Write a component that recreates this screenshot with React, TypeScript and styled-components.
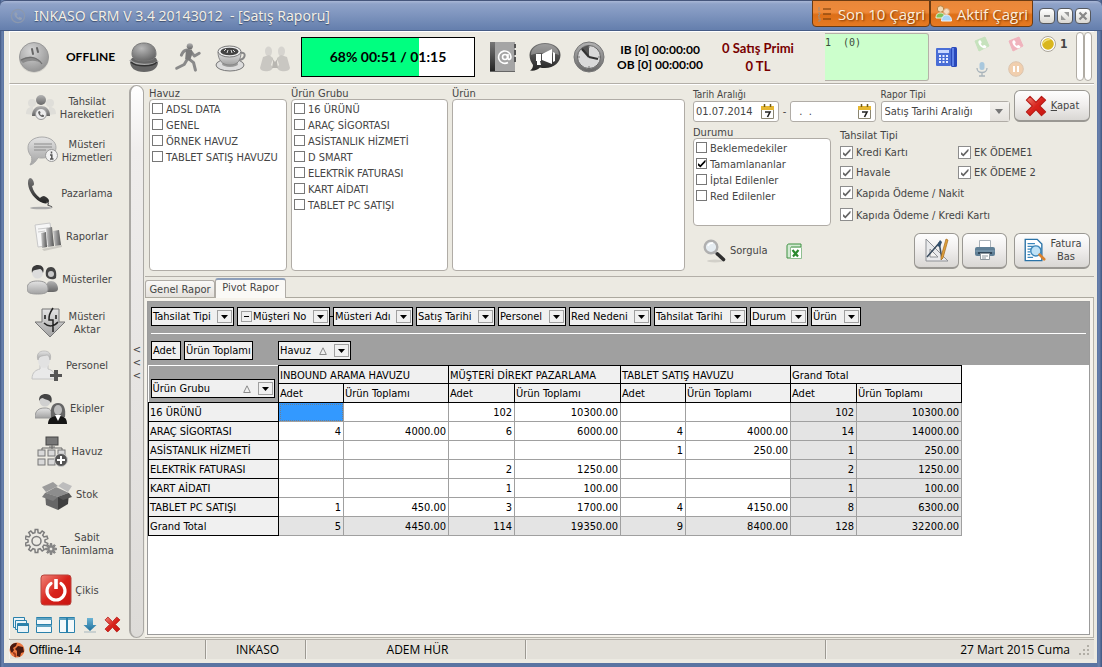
import React from "react";
import styled, { createGlobalStyle, css } from "styled-components";

const UI = '"DejaVu Sans Condensed", "Noto Sans", sans-serif';
const SEGOE = '"Open Sans", "Noto Sans", sans-serif';
const HEAVY = 'Lato, "Open Sans", sans-serif';

const GlobalStyle = createGlobalStyle`
  *, *::before, *::after { box-sizing: border-box; }
  body { margin: 0; font: 11px/14px ${UI}; color: #454545; background: #4b648f; }
  button, input, select { font: inherit; color: inherit; margin: 0; }
  button { cursor: pointer; }
  svg { display: block; flex: none; }
`;

/* ---------- window frame ---------- */

const Window = styled.div`
  min-height: 100vh;
  display: flex;
  flex-direction: column;
  padding: 0 5px 4px 4px;
  background: linear-gradient(90deg, #3f5580 0, #6b83ae 2px, #5a74a2 4px, #5a74a2 calc(100% - 5px), #6b83ae calc(100% - 3px), #3f5580 100%);
`;

const TitleBar = styled.header`
  height: 31px;
  margin: 0 -5px 0 -4px;
  padding: 0 11px 0 10px;
  display: flex;
  align-items: center;
  border-top: 1px solid #46567c;
  border-bottom: 1px solid #465c86;
  border-radius: 6px 6px 0 0;
  background: linear-gradient(#a9b7d6 0, #8fa2c8 3px, #8197c0 12px, #6680ae 28px);
`;

const Title = styled.h1`
  flex: 1;
  margin: 0 0 0 8px;
  font: 400 14px/20px "Noto Sans", "Open Sans", sans-serif;
  white-space: pre;
  color: #f3efe6;
  text-shadow: 0 1px 1px #3e4f70;
`;

const CallButton = styled.button`
  align-self: flex-start;
  height: 27px;
  width: ${(p: { $w: number }) => p.$w}px;
  margin-top: -1px;
  padding: 0;
  display: flex;
  align-items: center;
  justify-content: center;
  gap: 5px;
  border: 1px solid #6b3b12;
  border-radius: 0 0 4px 4px;
  background: linear-gradient(#e8873a, #ef8a3a 45%, #dd6f18 55%, #e67a22);
  font: 400 15px/20px ${SEGOE};
  white-space: nowrap;
  color: #fbeedd;
  text-shadow: 1px 1px 2px #7a3603;
`;

const WindowButtons = styled.div`
  display: flex;
  gap: 2px;
  margin-left: 6px;
`;

const WindowButton = styled.button`
  width: 16px;
  height: 16px;
  padding: 0;
  display: grid;
  place-items: center;
  border: 1px solid #55585e;
  border-radius: 4px;
  background: linear-gradient(#fff, #d9d7d2);
`;

const Client = styled.div`
  flex: 1;
  display: flex;
  flex-direction: column;
  padding: 0 3px 4px 5px;
  background: #eceae2;
`;

/* ---------- top toolbar ---------- */

const Toolbar = styled.div`
  height: 53px;
  display: flex;
  align-items: center;
  padding: 0 0 2px 8px;
  border-left: 1px solid #fff;
  border-top: 1px solid #fff;
  border-bottom: 1px solid #b3afa8;
  background: #eceae2;
`;

const ToolButton = styled.button`
  width: ${(p: { $w?: number }) => p.$w ?? 44}px;
  padding: 0;
  display: grid;
  place-items: center;
  border: 0;
  background: none;
`;

const Presence = styled.strong`
  width: 63px;
  margin-left: 9px;
  font: 700 12px/16px ${HEAVY};
  color: #000;
  text-align: center;
`;

const Progress = styled.div`
  width: 174px;
  height: 40px;
  margin: 0 8px 0 4px;
  display: grid;
  place-items: center;
  border: 1px solid #000;
  background: linear-gradient(90deg, #00ff80 68%, #fff 68%);
  font: 700 14px/20px ${HEAVY};
  color: #000;
`;

const Counter = styled.div`
  width: ${(p: { $w: number; $red?: boolean }) => p.$w}px;
  text-align: center;
  white-space: nowrap;
  font: 700 ${(p) => (p.$red ? "13px/18px" : "12px/15px")} ${HEAVY};
  color: ${(p) => (p.$red ? "#780000" : "#000")};
`;

const LineMonitor = styled.div`
  flex: 1;
  max-width: 104px;
  height: 48px;
  margin-left: 18px;
  border: 1px solid #b5b1a9;
  border-left: 0;
  border-radius: 0 3px 3px 0;
  background: #ccffcc;
  font: 10px/18px "DejaVu Sans Mono", monospace;
  color: #3b4b3b;
  white-space: pre;
`;

const CallGrid = styled.div`
  display: grid;
  grid-template-columns: 34px 34px;
  grid-auto-rows: 25px;
  margin-right: 7px;
`;

const Score = styled.div`
  align-self: flex-start;
  display: flex;
  align-items: center;
  gap: 4px;
  margin-top: 4px;
  font: 700 12px/16px ${UI};
`;

const Meters = styled.div`
  display: flex;
  margin: 0 2px 0 auto;
`;

const Meter = styled.div`
  width: 8px;
  height: 49px;
  border: 1px solid #b0aca4;
  border-radius: 4px;
  background: #fff;
`;

/* ---------- body ---------- */

const Body = styled.div`
  flex: 1;
  display: flex;
  border-top: 1px solid #fff;
  border-left: 1px solid #fff;
`;

const Sidebar = styled.nav`
  width: 119px;
  padding-top: 1px;
  display: flex;
  flex-direction: column;
`;

const NavItem = styled.button`
  height: ${(p: { $h?: number }) => p.$h ?? 43}px;
  padding: 0;
  display: flex;
  align-items: center;
  justify-content: center;
  gap: 3px;
  border: 0;
  background: none;
  line-height: 13px;
`;

const WindowTools = styled.div`
  display: flex;
  justify-content: space-around;
  padding: 7px 5px 0 0;
`;

const Splitter = styled.button`
  width: 15px;
  padding: 1px 0 0;
  border: 2px solid #aaa8a4;
  border-width: 1px 1px 1px 2px;
  border-radius: 8px;
  background: linear-gradient(#fff, #efedec 12%, #dddbd8);
  line-height: 13px;
`;

const Main = styled.main`
  flex: 1;
  min-width: 0;
  margin-left: 1px;
  display: flex;
  flex-direction: column;
`;

const Filters = styled.section`
  display: flex;
  gap: 4px;
  height: 192px;
  padding: 2px 4px 5px 4px;
  border-bottom: 1px solid #b3afa8;
`;

const ListGroup = styled.fieldset`
  width: ${(p: { $w?: number; $top?: number }) => (p.$w ? `${p.$w}px` : "auto")};
  flex: ${(p) => (p.$w ? "none" : "1")};
  min-width: 0;
  margin: 0;
  padding: ${(p) => p.$top ?? 0}px 0 0;
  border: 0;
  display: flex;
  flex-direction: column;
`;

const GroupLabel = styled.div`
  height: 12px;
  line-height: 13px;
`;

const ListBox = styled.div`
  flex: 1;
  padding: 1px 2px;
  border: 1px solid #b0aca6;
  border-radius: 4px;
  background: #fff;
`;

const CheckLabel = styled.label`
  height: ${(p: { $h: number }) => p.$h}px;
  line-height: ${(p) => p.$h + 2}px;
  display: flex;
  align-items: flex-start;
  gap: 3px;
  white-space: nowrap;
`;

const CheckBox = styled.input.attrs({ type: "checkbox" })`
  appearance: none;
  flex: none;
  width: ${(p: { $big?: boolean }) => (p.$big ? 13 : 11)}px;
  height: ${(p) => (p.$big ? 13 : 11)}px;
  margin-top: ${(p) => (p.$big ? 4 : 2)}px;
  border: 1px solid ${(p) => (p.$big ? "#8d8d8d" : "#777")};
  background: #fff;
  display: grid;
  place-items: center;
  &:checked::before {
    content: "";
    width: 8px;
    height: 8px;
    background: ${(p) => (p.$big ? "#666" : "#000")};
    clip-path: polygon(0 40%, 36% 70%, 100% 0, 100% 32%, 36% 100%, 0 70%);
  }
`;

const Query = styled.div`
  width: 397px;
  margin-left: 4px;
  padding-top: 2px;
  display: flex;
  flex-direction: column;
`;

const QueryRow = styled.div`
  display: flex;
  align-items: flex-end;
  justify-content: space-between;
`;

const DateRange = styled.div`
  display: flex;
  align-items: flex-end;
`;

const Field = styled.label`
  display: flex;
  flex-direction: column;
  font-size: 10px;
  line-height: 12px;
`;

const DateBox = styled.span`
  width: 86px;
  height: 21px;
  display: flex;
  align-items: center;
  padding-right: 3px;
  border: 1px solid #b0aca6;
  border-radius: 3px;
  background: #fff;
`;

const DateInput = styled.input`
  flex: 1;
  width: 0;
  padding: 0 0 0 2px;
  border: 0;
  outline: 0;
  background: none;
  font-size: 11px;
  white-space: pre;
`;

const Dash = styled.span`
  width: 11px;
  line-height: 20px;
  text-align: center;
`;

const SelectBox = styled.span`
  width: 129px;
  height: 21px;
  display: grid;
  align-items: center;
  border: 1px solid #b0aca6;
  border-radius: 3px;
  background: #fff;
  > * { grid-area: 1 / 1; }
`;

const Select = styled.select`
  appearance: none;
  width: 100%;
  padding: 0 20px 0 3px;
  border: 0;
  background: none;
  font-size: 11px;
`;

const SelectArrow = styled.span`
  justify-self: end;
  width: 19px;
  height: 19px;
  display: grid;
  place-items: center;
  background: linear-gradient(#f4f2ef, #e4e1dc);
  pointer-events: none;
`;

const PushButton = styled.button`
  width: ${(p: { $w: number; $h: number }) => p.$w}px;
  height: ${(p) => p.$h}px;
  padding: 0;
  display: flex;
  align-items: center;
  justify-content: center;
  gap: 4px;
  border: 1px solid #9a9893;
  border-bottom-width: 2px;
  border-radius: 6px;
  background: linear-gradient(#fefefe, #f1efee 45%, #d9d7d4);
  line-height: 13px;
`;

const Criteria = styled.div`
  display: flex;
  gap: 9px;
  margin-top: 4px;
`;

const PayGrid = styled.div`
  display: grid;
  grid-template-columns: 118px auto;
  margin-top: 1px;
`;

const PayFull = styled.div`
  grid-column: 1 / -1;
`;

const Actions = styled.div`
  flex: 1;
  display: flex;
  align-items: center;
  gap: 7px;
  padding: 4px 0 0 10px;
`;

const ReportTools = styled.div`
  display: flex;
  gap: 3px;
  margin-left: auto;
`;

const LinkButton = styled.button`
  display: flex;
  align-items: center;
  gap: 3px;
  padding: 0;
  border: 0;
  background: none;
`;

/* ---------- report tabs ---------- */

const Tabs = styled.div`
  height: 21px;
  display: flex;
  align-items: flex-end;
  border-bottom: 1px solid #aca99f;
`;

const Tab = styled.button<{ $active?: boolean }>`
  width: ${(p) => (p.$active ? 71 : 70)}px;
  padding: 0;
  white-space: nowrap;
  border: 1px solid #b0aca6;
  border-bottom: 0;
  border-radius: 3px 3px 0 0;
  ${(p) =>
    p.$active
      ? css`
          height: 20px;
          margin-bottom: -1px;
          padding-bottom: 2px;
          border-top: 2px solid #8d9fba;
          background: #faf9f6;
        `
      : css`
          height: 17px;
          padding-top: 2px;
          background: linear-gradient(#faf9f7, #e4e1dc);
        `}
`;

const Page = styled.div`
  flex: 1;
  padding: 3px 3px 2px 2px;
  border-right: 1px solid #b7b4ab;
  border-bottom: 1px solid #b7b4ab;
  background: #f6f3ec;
  display: flex;
`;

const Pivot = styled.div`
  flex: 1;
  border: 1px solid #9b9b9b;
  background: #fff;
  color: #000;
`;

const PivotZone = styled.div`
  padding: 5px 3px 0;
  background: #a0a0a0;
`;

const ChipRow = styled.div`
  display: flex;
  gap: 3px;
`;

const FilterRow = styled(ChipRow)`
  padding-bottom: 7px;
  border-bottom: 1px solid #fff;
`;

const DataRow = styled(ChipRow)`
  padding: 7px 0 5px;
`;

const ColumnField = styled.div`
  margin-left: 22px;
`;

const Chip = styled.div<{ $w: number; $linked?: boolean }>`
  width: ${(p) => p.$w}px;
  height: 19px;
  display: flex;
  align-items: center;
  padding: 0 1px 0 1px;
  border: 1px solid #000;
  background: #f0f0f0;
  white-space: nowrap;
  ${(p) =>
    p.$linked &&
    css`
      position: relative;
      &::after {
        content: "";
        position: absolute;
        left: 100%;
        width: 5px;
        height: 1px;
        background: #000;
      }
    `}
`;

const ChipText = styled.span`
  flex: 1;
`;

const ChipDrop = styled.button`
  width: 15px;
  height: 13px;
  flex: none;
  padding: 0;
  display: grid;
  place-items: center;
  border: 1px solid #a0a0a0;
  background: #f0f0f0;
`;

const Collapse = styled(ChipDrop)`
  width: 11px;
  height: 11px;
  margin: 0 1px 0 2px;
`;

const SortMark = styled.span`
  margin-right: 7px;
`;

const Grid = styled.table`
  width: 814px;
  table-layout: fixed;
  border-collapse: collapse;
  line-height: 14px;
`;

const HeadCell = styled.th`
  height: ${(p: { $tall?: boolean }) => (p.$tall ? 19 : 18)}px;
  padding: 2px 1px 0;
  border: 1px solid #000;
  background: #f0f0f0;
  font-weight: 400;
  text-align: left;
  white-space: nowrap;
`;

const Corner = styled.td`
  padding: 10px 0 0 2px;
  background: #a0a0a0;
`;

const Value = styled.td<{ $total?: boolean; $selected?: boolean }>`
  height: 19px;
  padding: 2px 2px 0;
  border: 1px solid #a0a0a0;
  text-align: right;
  background: ${(p) => (p.$selected ? "#3399ff" : p.$total ? "#e4e4e4" : "#fff")};
  ${(p) => p.$selected && "outline: 1px dotted #6f7f8f; outline-offset: -2px;"}
`;

/* ---------- status bar ---------- */

const StatusBar = styled.footer`
  height: 20px;
  display: flex;
  margin-top: 1px;
  border-top: 1px solid #b3afa8;
  background: #e3e0d9;
  font: 12px/18px ${SEGOE};
  color: #000;
`;

const StatusCell = styled.div`
  width: ${(p: { $w?: number; $align?: string }) => (p.$w ? `${p.$w}px` : "auto")};
  flex: ${(p) => (p.$w ? "none" : "1")};
  display: flex;
  align-items: center;
  justify-content: ${(p) => p.$align ?? "center"};
  gap: 4px;
  padding-left: ${(p) => (p.$align ? 0 : 4)}px;
  border-right: 1px solid #9c9992;
  box-shadow: inset 1px 0 #f4f2ee;
  &:last-child { border-right: 0; }
`;

const Connection = styled.span`
  font: 12px/18px "Liberation Sans", sans-serif;
`;

/* ---------- drawings ---------- */

const Defs = styled.svg`
  position: absolute;
`;

const GradientDefs = () => (
  <Defs width="0" height="0" aria-hidden>
    <defs>
      <linearGradient id="g-light" x1="0" y1="0" x2="0" y2="1"><stop offset="0" stopColor="#e4e4e4" /><stop offset="1" stopColor="#a2a2a2" /></linearGradient>
      <linearGradient id="g-mid" x1="0" y1="0" x2="0" y2="1"><stop offset="0" stopColor="#b4b4b4" /><stop offset="1" stopColor="#666" /></linearGradient>
      <linearGradient id="g-dark" x1="0" y1="0" x2="0" y2="1"><stop offset="0" stopColor="#777" /><stop offset="1" stopColor="#222" /></linearGradient>
      <linearGradient id="g-side" x1="0" y1="0" x2="1" y2="0"><stop offset="0" stopColor="#ccc" /><stop offset="1" stopColor="#555" /></linearGradient>
      <linearGradient id="g-red" x1="0" y1="0" x2="1" y2="1"><stop offset="0" stopColor="#f08478" /><stop offset=".5" stopColor="#d8231c" /><stop offset="1" stopColor="#c81410" /></linearGradient>
      <linearGradient id="g-blue" x1="0" y1="0" x2="0" y2="1"><stop offset="0" stopColor="#6db4d4" /><stop offset="1" stopColor="#1c6f9c" /></linearGradient>
      <radialGradient id="g-ball" cx=".4" cy=".3" r=".8"><stop offset="0" stopColor="#d6d6d6" /><stop offset="1" stopColor="#8d8d8d" /></radialGradient>
      <radialGradient id="g-bun" cx=".4" cy=".3" r=".8"><stop offset="0" stopColor="#b8b8b8" /><stop offset="1" stopColor="#5e5e5e" /></radialGradient>
    </defs>
  </Defs>
);

const Ico = ({ s = 32, children, v = "0 0 32 32", h }: { s?: number; h?: number; v?: string; children: React.ReactNode }) => (
  <svg width={s} height={h ?? s} viewBox={v} fill="none" aria-hidden>{children}</svg>
);

const HANDSET = "M3 2c1.500-1 3-.5 3.600.8l1 2.400c.3.900 0 1.600-.8 2.200l-.8.600c.8 1.800 2.200 3.200 4 4l.6-.8c.6-.8 1.300-1.100 2.200-.8l2.400 1c1.300.6 1.800 2.100.8 3.600-1.200 1.500-3 1.800-5 1C6.500 14.300 3.700 11.500 2 7 1.200 5 1.500 3.200 3 2z";

const AppIcon = () => (
  <Ico s={16} v="0 0 18 18"><circle cx="9" cy="9" r="7.500" stroke="#8b98ae" strokeWidth="1.500" /><g transform="translate(4 4) scale(.58)"><path d={HANDSET} fill="#93a0b6" /></g></Ico>
);
const ListIcon = () => (
  <Ico s={16} v="0 0 16 16"><path d="M6 3h8M6 8h8M6 13h8" stroke="#6a3608" strokeWidth="1" /><path d="M2 1v4M1 7h2v1l-2 2h2M1 12h2v3H1" stroke="#9b8f82" /></Ico>
);
const UsersIcon = () => (
  <Ico s={17} v="0 0 17 17"><circle cx="5.500" cy="4" r="3.200" fill="#f3d9b4" stroke="#b8803e" /><path d="M1 13c0-4 2-5 4.500-5S10 9 10 13z" fill="#7ec25a" stroke="#e8f7df" /><circle cx="11.500" cy="6.500" r="3" fill="#f5dcc0" stroke="#d8a878" /><path d="M6.500 16c0-4 2-6 5-6s5 2 5 6z" fill="#a9d4f5" stroke="#eef7ff" /></Ico>
);
const SadIcon = () => (
  <Ico><circle cx="16" cy="17" r="15" fill="#00000018" /><circle cx="16" cy="16" r="14.500" fill="url(#g-ball)" stroke="#999" /><path d="M14 8l1 5M19 7l1 4" stroke="#666" strokeWidth="2" strokeLinecap="round" /><path d="M2 19c7-5 17-5 22 4-5-4-12-4-19-1z" fill="#8a8a8a" /><path d="M3 19c7-4 16-4 21 4" stroke="#6f6f6f" strokeWidth="1.200" /></Ico>
);
const BurgerIcon = () => (
  <Ico><path d="M2 20c0 7 5 11 14 11s14-4 14-10l-2-4H4z" fill="#666" /><path d="M2 19c4 6 24 6 28 1" stroke="#aaa" strokeWidth="2" /><path d="M3 21c5 5 22 5 26 0" stroke="#333" strokeWidth="1.500" /><path d="M4 13C4 6 9 2 16 2s12 4 12 11c0 5-5 7-12 7S4 18 4 13z" fill="url(#g-bun)" stroke="#777" /></Ico>
);
const RunIcon = () => (
  <Ico s={30}><circle cx="19" cy="4.500" r="3.300" fill="url(#g-mid)" /><path d="M18 9c-3-1-6 0-8 5M20 10l4 5 5-3M16 19l-3 5-8 4M18 18l5 4 2 8" stroke="#8a8a8a" strokeWidth="3.200" strokeLinecap="round" strokeLinejoin="round" /><path d="M15 8h6l1 4-3 8-5-2z" fill="#7b7b7b" /></Ico>
);
const CupIcon = () => (
  <Ico><ellipse cx="15" cy="24" rx="14" ry="6" fill="#ddd" stroke="#777" /><ellipse cx="15" cy="23" rx="8" ry="3" fill="#999" /><path d="M25 12c7-2 6 7-2 7" stroke="#888" strokeWidth="2" /><path d="M3 11c0 8 4 13 12 13s11-5 11-13z" fill="url(#g-light)" stroke="#888" /><ellipse cx="14.500" cy="10.500" rx="11.500" ry="5.500" fill="#eee" stroke="#777" /><ellipse cx="14.500" cy="10.500" rx="9" ry="3.800" fill="#444" /><path d="M9 10l2-2m1 4l1-3m4 3l-1-3m4 2l-2-2" stroke="#ddd" /></Ico>
);
const MeetingIcon = () => (
  <Ico><g fill="#c9c7c2"><path d="M6 10c0-6 7-6 7 0 0 3-1 5-3 6-3-1-4-3-4-6zM19 10c0-6 7-6 7 0 0 3-1 5-4 6-2-1-3-3-3-6z" fill="#d6d4cf" /><path d="M4 16l6-2 4 3-2 7 2 2c0 5-12 6-13 1zM28 16l-6-2-4 3 2 7-2 2c0 5 12 6 13 1z" /></g><path d="M13 17l3 4 3-4-1 4 1 6h-6l1-6z" fill="#b8b6b1" /></Ico>
);
const BookIcon = () => (
  <Ico s={28} h={32} v="0 0 28 32"><rect x="1" y="1" width="25" height="30" fill="#a5a5a5" /><rect x="1" y="1" width="5" height="30" fill="url(#g-dark)" /><path d="M25 3h2v4h-2zM25 9h2v5h-2zM25 16h2v5h-2z" fill="#555" /><path d="M1 30h25v1H1z" fill="#666" /><circle cx="16" cy="16" r="2.500" stroke="#fff" strokeWidth="1.600" /><path d="M19 13v4c0 2.500 3 1.500 3-1a6.200 6.200 0 1 0-3 5.500" stroke="#fff" strokeWidth="1.600" /></Ico>
);
const MegaphoneIcon = () => (
  <Ico><path d="M16 2c9 0 15.500 5 15.500 12S25 27 16 27c-2 0-4 0-5-.5C9 29 5 30 1 29.500c2-1 3-3 3-5.500C2 21 .5 18 .5 14 .5 7 7 2 16 2z" fill="url(#g-dark)" /><path d="M2 14C2 7 8 3 16 3s14 4 14 11c-7-3-20-3-28 0z" fill="#ffffff4c" /><path d="M7 13h5v7H7zM13 13l10-5v15l-10-4zM8 20h3l1 4H8zM24 11l2 1v8l-2 1z" fill="#fff" /></Ico>
);
const ClockIcon = () => (
  <Ico><circle cx="16" cy="16" r="15" fill="url(#g-mid)" stroke="#777" /><circle cx="16" cy="16" r="11.500" fill="#d9d9d9" stroke="#666" /><path d="M16 16V4.500A11.500 11.500 0 0 0 8 8z" fill="#555" /><path d="M16 16L9 8M16 16l9 2" stroke="#333" strokeWidth="2.200" /><path d="M16 5v2M27 16h-2M16 27v-2M5 16h2" stroke="#777" /></Ico>
);
const PhoneDeviceIcon = () => (
  <Ico s={22} v="0 0 22 22"><rect x="0" y="2" width="15" height="18" rx="1" fill="#4a6ed6" /><rect x="15" y="1" width="6" height="20" rx="1.500" fill="#2a49bb" /><rect x="16" y="2" width="2" height="18" fill="#5f82e6" /><path d="M2 4h11v3H2z" fill="#c9d8ff" /><path d="M3 10h9M3 13h9M3 16h9" stroke="#e8eeff" strokeWidth="2" strokeDasharray="2 1.500" /></Ico>
);
const CardPhone = ({ fill }: { fill: string }) => (
  <Ico s={16} v="0 0 16 16"><path d="M1 5l10-4 4 9-10 5z" fill={fill} stroke={fill} strokeLinejoin="round" /><g transform="translate(3.500 3.500) scale(.54)"><path d={HANDSET} fill="#fff" /></g></Ico>
);
const MicIcon = () => (
  <Ico s={16} v="0 0 16 16"><rect x="5.500" y="1" width="5" height="8" rx="2.500" fill="#a9c8dd" /><path d="M3 7c0 6 10 6 10 0M8 11v4M5 15h6" stroke="#a9b4bb" strokeWidth="1.300" /></Ico>
);
const PauseIcon = () => (
  <Ico s={16} v="0 0 16 16"><circle cx="8" cy="8" r="7.300" fill="#f1cfae" stroke="#dcc5ae" /><path d="M6 5v6M10 5v6" stroke="#fff" strokeWidth="2" /></Ico>
);
const CoinIcon = () => (
  <Ico s={16} v="0 0 16 16"><circle cx="8" cy="8" r="7.500" fill="#fff" stroke="#aaa59a" /><circle cx="8" cy="8" r="5.800" fill="#d9b61e" /><path d="M2.500 9c2-4 6-5 9-5a5.800 5.800 0 0 0-9 5z" fill="#f2e27a" /></Ico>
);

const PeopleCallIcon = () => (
  <Ico><g fill="#dfded9"><circle cx="7" cy="11" r="4" /><circle cx="25" cy="11" r="4" /><path d="M1 22c0-6 3-7 7-7v8zM31 22c0-6-3-7-7-7v8z" /></g><circle cx="16" cy="8" r="5" fill="url(#g-mid)" /><path d="M7 24c0-7 4-10 9-10s9 3 9 10z" fill="url(#g-mid)" /><circle cx="16" cy="22" r="5.500" fill="#ededed" stroke="#999" /><g transform="translate(12.500 18.500) scale(.4)"><path d={HANDSET} fill="#666" /></g></Ico>
);
const ChatInfoIcon = () => (
  <Ico><path d="M15 2c8 0 14 4.500 14 10.500S23 23 15 23c-1.500 0-3 0-4-.4C9 26 7 29 3 30c2-3 2-6 1.500-8.500C2 19 1 16 1 12.500 1 6.500 7 2 15 2z" fill="url(#g-light)" stroke="#aaa" /><path d="M7 9h18M7 12h18M7 15h12" stroke="#8b8b8b" strokeWidth="1.200" /><circle cx="24.500" cy="20.500" r="6" fill="#f2f2f2" stroke="#999" /><path d="M24.500 16.500v2M23 20h1.800v4M23 24h3.500" stroke="#555" strokeWidth="1.500" /></Ico>
);
const HandsetIcon = () => (
  <Ico><ellipse cx="15" cy="30" rx="11" ry="1.300" fill="#aaa" /><path d="M4 0c2 0 4 3 4 6 0 1-1 2-2 2 1 5 4 9 8 12 1-1 2-2 4-2 3 1 5 3 5 5s-3 3-6 2C9 22 3 14 2 6c0-3 0-5 2-6z" fill="url(#g-dark)" /><path d="M20 24c2 0 3 1 2 2.500s4 1 4 3" stroke="#555" strokeWidth="1.200" /></Ico>
);
const ReportIcon = () => (
  <Ico><path d="M4 4l15-2 3 22-15 2z" fill="#f6f6f6" stroke="#c9c9c9" /><path d="M7 8l10-1M7 11l7-1" stroke="#ccc" /><path d="M10 12l5-1 1 15-5 1z" fill="url(#g-side)" /><path d="M15 7l6-1 2 19-6 1z" fill="url(#g-side)" /><path d="M22 10l6-1 2 15-6 1z" fill="url(#g-side)" /><path d="M11 28l20-4v2l-18 4z" fill="#00000022" /></Ico>
);
const CustomersIcon = () => (
  <Ico><path d="M19 12c-1-6 1-9 5-9s6 4 5 11c-2 2-8 2-10-2z" fill="#444" /><circle cx="24" cy="10" r="3" fill="#c9c9c9" /><path d="M19 28c0-8 1-11 5-11s7 3 7 8c0 2-2 3-5 3z" fill="url(#g-mid)" /><circle cx="10.500" cy="9" r="5.500" fill="#dcdcdc" /><path d="M5 9c-1-6 2-8 6-8s7 3 5 8c-1-3-2-4-3-4-3 1-7 0-8 4z" fill="#3a3a3a" /><path d="M0 25c0-6 4-8 10.500-8S21 19 21 25c0 4-4 5-10.500 5S0 29 0 25z" fill="url(#g-light)" stroke="#999" /></Ico>
);
const TransferIcon = () => (
  <Ico><path d="M8 2h17v13h6L16 30 1 15h7z" fill="url(#g-light)" stroke="#777" /><path d="M11 8v4M22 8v4" stroke="#222" strokeWidth="1.600" /><path d="M19 1c-4 6-4 8-4 12h4v12M10 16c4 4 10 4 14-1" stroke="#222" strokeWidth="1.500" /></Ico>
);
const AddPersonIcon = () => (
  <Ico><path d="M1 29c0-7 4-9 8-10v-4h8v4c4 1 7 3 7 10z" fill="#e9e9e9" stroke="#c4c4c4" /><ellipse cx="13" cy="10" rx="6" ry="8" fill="#e2e2e2" /><path d="M7 10C5 4 8 1 13 1s8 3 6 9c-1-4-1-4-3-5-3 1-8 0-9 5z" fill="url(#g-light)" stroke="#aaa" strokeWidth=".6" /><path d="M23 20h4v4h4v3h-4v4h-4v-4h-4v-3h4z" fill="#555" /></Ico>
);
const TeamIcon = () => (
  <Ico><circle cx="10" cy="8" r="5.500" fill="#d0d0d0" /><path d="M4 8c0-5 2-7 7-7s7 4 5 9c-2-4-6-3-8-5-2 0-3 1-4 3z" fill="#444" /><path d="M0 25c0-8 4-10 10-10 5 0 7 2 8 10z" fill="url(#g-light)" stroke="#999" /><path d="M16 24c-1-9 1-14 7-14s8 6 7 14z" fill="#666" /><ellipse cx="23" cy="17" rx="4" ry="5" fill="#bdbdbd" /><path d="M13 31c0-6 4-8 10-8s9 2 9 8z" fill="#151515" /><path d="M20 22l3 6 3-6z" fill="#fff" /></Ico>
);
const PoolIcon = () => (
  <Ico><rect x="9" y="1" width="12" height="8" fill="#777" stroke="#444" /><path d="M15 9v4M5 14v-2h20v2M12 11h6" stroke="#666" /><g fill="#d9d9d9" stroke="#777"><rect x="1" y="14" width="7" height="6" /><rect x="11" y="14" width="7" height="6" /><rect x="21" y="14" width="7" height="6" /><rect x="1" y="23" width="7" height="6" /><rect x="11" y="23" width="7" height="6" /></g><circle cx="24" cy="24" r="6.500" fill="#555" stroke="#ccc" /><path d="M24 20v8M20 24h8" stroke="#fff" strokeWidth="2" /></Ico>
);
const BoxIcon = () => (
  <Ico><path d="M4 14l13 4v13L5 26z" fill="#666" /><path d="M17 18l11-4-1 11-10 6z" fill="#3f3f3f" /><path d="M4 14l11-6 13 6-11 4z" fill="#8d8d8d" /><path d="M1 8l11-5 5 4-12 6z" fill="#9c9c9c" /><path d="M17 7l5-4 9 4-4 6z" fill="#bdbdbd" /><path d="M4 14l-3 4 11 4 5-4z" fill="#7c7c7c" /><path d="M28 14l3 4-9 3-5-3z" fill="#555" /></Ico>
);

/* Outline of a cog with n teeth between the radii r and r + t. */
const cog = (x: number, y: number, r: number, t: number, n: number) => {
  const pts: string[] = [];
  for (let i = 0; i < n; i++) {
    [[-0.3, r], [-0.18, r + t], [0.18, r + t], [0.3, r]].forEach(([o, d]) => {
      const a = ((i + o) / n) * Math.PI * 2;
      pts.push(`${(x + Math.sin(a) * d).toFixed(2)} ${(y - Math.cos(a) * d).toFixed(2)}`);
    });
  }
  return `M${pts.join("L")}Z`;
};

const GearsIcon = () => (
  <Ico><g stroke="#7d7d7d"><path d={cog(11.500, 13, 8.500, 3, 10)} fill="#eceae4" strokeWidth="1.500" /><circle cx="11.500" cy="13" r="4.500" strokeWidth="1.500" /><path d={cog(26, 21, 3.500, 2, 8)} fill="#8a8a8a" /><circle cx="26" cy="21" r="2" fill="#eceae4" /></g></Ico>
);
const PowerIcon = () => (
  <Ico><rect x="1" y="1" width="30" height="30" rx="3" fill="url(#g-red)" stroke="#b9443c" /><path d="M11 9.500a9 9 0 1 0 10 0" stroke="#fff" strokeWidth="3.200" strokeLinecap="round" /><path d="M16 5v10" stroke="#fff" strokeWidth="3.600" /></Ico>
);

const CascadeIcon = () => (
  <Ico s={16} v="0 0 16 16"><g fill="#e8f3f8" stroke="#2a81ab"><path d="M.5.5h11v10H.5z" /><path d="M2.500 3.500h11v9h-11z" /><path d="M4.500 6.500h11v9h-11z" /></g><path d="M5 8h10" stroke="#2a81ab" strokeWidth="2" /></Ico>
);
const TileHIcon = () => (
  <Ico s={16} v="0 0 16 16"><path d="M.5.5h15v15H.5z" fill="#f4f9fb" stroke="#2a81ab" /><path d="M0 2h16M0 9h16" stroke="#5fa3c2" strokeWidth="2" /><path d="M0 7.500h16" stroke="#2a81ab" /></Ico>
);
const TileVIcon = () => (
  <Ico s={16} v="0 0 16 16"><path d="M.5.5h15v15H.5z" fill="#f4f9fb" stroke="#2a81ab" /><path d="M0 2h16" stroke="#5fa3c2" strokeWidth="2" /><path d="M8 0v16" stroke="#2a81ab" strokeWidth="2" /></Ico>
);
const DownIcon = () => (
  <Ico s={16} v="0 0 16 16"><path d="M5 1h6v7h3.500L8 14 1.500 8H5z" fill="url(#g-blue)" /><path d="M2 15h12" stroke="#a6b6bd" /></Ico>
);
const CrossIcon = ({ s }: { s: number }) => (
  <Ico s={s} v="0 0 24 24"><path d="M5.500 1.500L12 8l6-6.500 4.500 4L16 12l6.500 6.500-4.500 4L12 16l-6.500 6.500-4-4L8 12 1.500 5.500z" fill="url(#g-red)" stroke="#b81c18" strokeWidth="1.200" strokeLinejoin="round" /></Ico>
);
const GlobeIcon = () => (
  <Ico s={16} v="0 0 16 16"><circle cx="8" cy="8" r="7.500" fill="#ee7a42" /><path d="M1 5c2-4 5-4 7-4l-1 3-3 2 1 2-2 3C1 9 1 7 1 5zM9 4l5 1 1 5-3 1-1 4-3-1V9l-2-2z" fill="#4b1a10" /><path d="M4 11c2 0 3 2 2 4" stroke="#a53b1c" strokeWidth="2" /></Ico>
);

const CalendarIcon = () => (
  <Ico s={15} h={17} v="0 0 15 17"><path d="M1.500 3.500h12v12h-12z" fill="#fff" stroke="#8b8672" /><path d="M1 3h13v4H1z" fill="#e5b731" /><path d="M4.500 1v3M10.500 1v3" stroke="#6f5a1d" strokeWidth="1.500" /><path d="M5 9h5l-2.500 5" stroke="#222" strokeWidth="1.600" /></Ico>
);
const LensIcon = () => (
  <Ico s={24} v="0 0 24 24"><ellipse cx="12" cy="22" rx="8" ry="1.500" fill="#0000001c" /><path d="M12 13l3 3" stroke="#999" strokeWidth="2.500" /><path d="M14.500 15l6 5.500" stroke="#2f2f2f" strokeWidth="3.600" strokeLinecap="round" /><circle cx="8" cy="8" r="6.300" fill="#e6edf2" stroke="#b0b0b0" strokeWidth="2.400" /><path d="M5 7c1-3 4-3 5-3" stroke="#fff" strokeWidth="1.500" /></Ico>
);
const ExcelIcon = () => (
  <Ico s={16} v="0 0 16 16"><path d="M1 15V3c0-1.500 1-2 2-2h12v3H5v11z" fill="#d3ead3" stroke="#3d9140" /><path d="M4.500 4.500h11v11h-11z" fill="#fff" stroke="#8fbf91" /><path d="M6.500 7l5.500 6.500M12.500 7L7 13.500" stroke="#2b8a2f" strokeWidth="2.200" /></Ico>
);
const DesignIcon = () => (
  <Ico s={26} v="0 0 26 26"><path d="M2 2v22h22z" fill="#e9eaec" stroke="#8e9196" /><path d="M6 12v8h8z" fill="#f4f3f1" stroke="#8e9196" /><path d="M16 5L3 20M15 5l3 17" stroke="#3a4c5e" strokeWidth="1.500" /><path d="M13 9l3-6 2 2-2 5z" fill="#31506f" /><path d="M22 2l2 1-5 18-2 2 0-3z" fill="#e0a13c" stroke="#a56a1c" strokeWidth=".7" /></Ico>
);
const PrinterIcon = () => (
  <Ico s={22} v="0 0 22 22"><path d="M5.500 1.500h11v7h-11z" fill="#fff" stroke="#a9b1b8" /><rect x="1" y="8" width="20" height="9" rx="2" fill="#5f7f96" /><path d="M1.500 12h19" stroke="#87a3b6" /><path d="M4 13h14v2H4z" fill="#31475a" /><path d="M6.500 14.500h9v6h-9z" fill="#fff" stroke="#8d979e" /><path d="M8 17h6M8 19h4" stroke="#8d979e" /></Ico>
);
const InvoiceIcon = () => (
  <Ico s={24} v="0 0 24 26"><path d="M2.500 1.500h13l5 5v18h-18z" fill="#fff" stroke="#2b73a7" strokeWidth="1.500" /><path d="M5 6h8M5 9h12M5 12h4M5 15h3M5 18h3M5 21h6" stroke="#3a86bb" strokeWidth="1.300" /><circle cx="14" cy="14" r="5.500" fill="#bfe2f6" stroke="#3c86b9" strokeWidth="1.500" /><path d="M18 18l5 5" stroke="#d9812d" strokeWidth="3" strokeLinecap="round" /></Ico>
);
const DropArrow = () => (
  <Ico s={7} h={4} v="0 0 7 4"><path d="M0 0h7L3.500 4z" fill="#000" /></Ico>
);
const GreyArrow = () => (
  <Ico s={8} h={5} v="0 0 8 5"><path d="M0 0h8L4 5z" fill="#777" /></Ico>
);
const SortArrow = () => (
  <Ico s={8} h={8} v="0 0 8 8"><path d="M4 .8L7.300 7.500H.7z" stroke="#8a8a8a" /></Ico>
);
const GripIcon = () => (
  <Ico s={12} v="0 0 12 12"><path d="M9 1h2v2H9zM9 5h2v2H9zM5 5h2v2H5zM9 9h2v2H9zM5 9h2v2H5zM1 9h2v2H1z" fill="#b1aea6" /></Ico>
);

/* ---------- data ---------- */

const NAV: { label: string[]; icon: React.ReactNode; h?: number }[] = [
  { label: ["Tahsilat", "Hareketleri"], icon: <PeopleCallIcon /> },
  { label: ["Müsteri", "Hizmetleri"], icon: <ChatInfoIcon /> },
  { label: ["Pazarlama"], icon: <HandsetIcon /> },
  { label: ["Raporlar"], icon: <ReportIcon /> },
  { label: ["Müsteriler"], icon: <CustomersIcon /> },
  { label: ["Müsteri", "Aktar"], icon: <TransferIcon /> },
  { label: ["Personel"], icon: <AddPersonIcon /> },
  { label: ["Ekipler"], icon: <TeamIcon /> },
  { label: ["Havuz"], icon: <PoolIcon /> },
  { label: ["Stok"], icon: <BoxIcon /> },
  { label: ["Sabit", "Tanimlama"], icon: <GearsIcon />, h: 55 },
  { label: ["Çikis"], icon: <PowerIcon />, h: 38 },
];

const POOLS = ["ADSL DATA", "GENEL", "ÖRNEK HAVUZ", "TABLET SATIŞ HAVUZU"];
const GROUPS = ["16 ÜRÜNÜ", "ARAÇ SİGORTASI", "ASİSTANLIK HİZMETİ", "D SMART", "ELEKTRİK FATURASI", "KART AİDATI", "TABLET PC SATIŞI"];
const STATES = ["Beklemedekiler", "Tamamlananlar", "İptal Edilenler", "Red Edilenler"];

const FIELDS: [string, number][] = [
  ["Tahsilat Tipi", 83], ["Müşteri No", 93], ["Müsteri Adı", 80], ["Satış Tarihi", 79], ["Personel", 68],
  ["Red Nedeni", 82], ["Tahsilat Tarihi", 93], ["Durum", 58], ["Ürün", 50],
];

const COLUMNS = ["INBOUND ARAMA HAVUZU", "MÜŞTERİ DİREKT PAZARLAMA", "TABLET SATIŞ HAVUZU", "Grand Total"];
const WIDTHS = [130, 65, 105, 66, 106, 65, 105, 66, 105];

const ROWS: [string, string[]][] = [
  ["16 ÜRÜNÜ", ["", "", "102", "10300.00", "", "", "102", "10300.00"]],
  ["ARAÇ SİGORTASI", ["4", "4000.00", "6", "6000.00", "4", "4000.00", "14", "14000.00"]],
  ["ASİSTANLIK HİZMETİ", ["", "", "", "", "1", "250.00", "1", "250.00"]],
  ["ELEKTRİK FATURASI", ["", "", "2", "1250.00", "", "", "2", "1250.00"]],
  ["KART AİDATI", ["", "", "1", "100.00", "", "", "1", "100.00"]],
  ["TABLET PC SATIŞI", ["1", "450.00", "3", "1700.00", "4", "4150.00", "8", "6300.00"]],
  ["Grand Total", ["5", "4450.00", "114", "19350.00", "9", "8400.00", "128", "32200.00"]],
];

const Check = ({ label, checked, big, h = 16 }: { label: string; checked?: boolean; big?: boolean; h?: number }) => (
  <CheckLabel $h={h}>
    <CheckBox $big={big} defaultChecked={checked} />
    {label}
  </CheckLabel>
);

const CheckList = ({ title, w, items, checked }: { title: string; w?: number; items: string[]; checked?: string }) => (
  <ListGroup $w={w} aria-label={title}>
    <GroupLabel>{title}</GroupLabel>
    <ListBox>
      {items.map((i) => <Check key={i} label={i} checked={i === checked} />)}
    </ListBox>
  </ListGroup>
);

const PivotField = ({ label, w, sorted, drop, collapse }: { label: string; w: number; sorted?: boolean; drop?: boolean; collapse?: boolean }) => (
  <Chip $w={w} $linked={collapse}>
    {collapse && <Collapse aria-label="Daralt"><Ico s={5} h={1} v="0 0 5 1"><path d="M0 0h5v1H0z" fill="#000" /></Ico></Collapse>}
    <ChipText>{label}</ChipText>
    {sorted && <SortMark><SortArrow /></SortMark>}
    {drop && <ChipDrop aria-label={`${label} filtresi`}><DropArrow /></ChipDrop>}
  </Chip>
);

export default function App() {
  return (
    <Window>
      <GlobalStyle />
      <GradientDefs />
      <TitleBar>
        <AppIcon />
        <Title>{"INKASO CRM V 3.4 20143012  - [Satış Raporu]"}</Title>
        <CallButton $w={118}><ListIcon />Son 10 Çagri</CallButton>
        <CallButton $w={103}><UsersIcon />Aktif Çagri</CallButton>
        <WindowButtons>
          <WindowButton aria-label="Küçült"><Ico s={10} v="0 0 10 10"><path d="M2 4h6v2H2z" fill="#888" /></Ico></WindowButton>
          <WindowButton aria-label="Geri yükle"><Ico s={10} v="0 0 10 10"><path d="M4 1h5v5zM1 4l5 5H1z" fill="#999" /></Ico></WindowButton>
          <WindowButton aria-label="Kapat"><Ico s={10} v="0 0 10 10"><path d="M1.500 1.500l7 7M8.500 1.500l-7 7" stroke="#888" strokeWidth="2.200" /></Ico></WindowButton>
        </WindowButtons>
      </TitleBar>

      <Client>
        <Toolbar>
          <ToolButton $w={32} aria-label="Durum"><SadIcon /></ToolButton>
          <Presence>OFFLINE</Presence>
          <ToolButton $w={43} aria-label="Yemek"><BurgerIcon /></ToolButton>
          <ToolButton aria-label="Dışarıda"><RunIcon /></ToolButton>
          <ToolButton aria-label="Mola"><CupIcon /></ToolButton>
          <ToolButton aria-label="Toplantı"><MeetingIcon /></ToolButton>
          <Progress>68% 00:51 / 01:15</Progress>
          <ToolButton $w={40} aria-label="Rehber"><BookIcon /></ToolButton>
          <ToolButton aria-label="Duyuru"><MegaphoneIcon /></ToolButton>
          <ToolButton aria-label="Saat"><ClockIcon /></ToolButton>
          <Counter $w={98}>IB [0] 00:00:00<br />OB [0] 00:00:00</Counter>
          <Counter $w={98} $red>0 Satış Primi<br />0 TL</Counter>
          <LineMonitor>{"1  (0)"}</LineMonitor>
          <ToolButton $w={36} aria-label="Telefon"><PhoneDeviceIcon /></ToolButton>
          <CallGrid>
            <ToolButton $w={34} aria-label="Ara"><CardPhone fill="#c6e2bd" /></ToolButton>
            <ToolButton $w={34} aria-label="Kapat"><CardPhone fill="#f0b3bd" /></ToolButton>
            <ToolButton $w={34} aria-label="Mikrofon"><MicIcon /></ToolButton>
            <ToolButton $w={34} aria-label="Beklet"><PauseIcon /></ToolButton>
          </CallGrid>
          <Score><CoinIcon />1</Score>
          <Meters><Meter /><Meter /></Meters>
        </Toolbar>

        <Body>
          <Sidebar>
            {NAV.map((n) => (
              <NavItem key={n.label.join(" ")} $h={n.h}>
                {n.icon}
                <span>{n.label[0]}{n.label[1] && <><br />{n.label[1]}</>}</span>
              </NavItem>
            ))}
            <WindowTools>
              <ToolButton $w={20} aria-label="Basamakla"><CascadeIcon /></ToolButton>
              <ToolButton $w={20} aria-label="Yatay döşe"><TileHIcon /></ToolButton>
              <ToolButton $w={20} aria-label="Dikey döşe"><TileVIcon /></ToolButton>
              <ToolButton $w={20} aria-label="Küçült"><DownIcon /></ToolButton>
              <ToolButton $w={20} aria-label="Kapat"><CrossIcon s={17} /></ToolButton>
            </WindowTools>
          </Sidebar>
          <Splitter aria-label="Menüyü gizle">&lt;<br />&lt;<br />&lt;</Splitter>

          <Main>
            <Filters>
              <CheckList title="Havuz" w={138} items={POOLS} />
              <CheckList title="Ürün Grubu" w={157} items={GROUPS} />
              <CheckList title="Ürün" items={[]} />
              <Query>
                <QueryRow>
                  <DateRange>
                    <Field>Tarih Aralığı
                      <DateBox><DateInput defaultValue="01.07.2014" /><CalendarIcon /></DateBox>
                    </Field>
                    <Dash>-</Dash>
                    <DateBox><DateInput aria-label="Bitiş tarihi" defaultValue="  .  ." /><CalendarIcon /></DateBox>
                  </DateRange>
                  <Field>Rapor Tipi
                    <SelectBox>
                      <Select defaultValue="Satış Tarihi Aralığı"><option>Satış Tarihi Aralığı</option></Select>
                      <SelectArrow><GreyArrow /></SelectArrow>
                    </SelectBox>
                  </Field>
                  <PushButton $w={76} $h={32}><CrossIcon s={22} /><span><u>K</u>apat</span></PushButton>
                </QueryRow>
                <Criteria>
                  <CheckList title="Durumu" w={138} items={STATES} checked="Tamamlananlar" />
                  <ListGroup $top={3} aria-label="Tahsilat Tipi">
                    <GroupLabel>Tahsilat Tipi</GroupLabel>
                    <PayGrid>
                      <Check big checked h={20} label="Kredi Kartı" />
                      <Check big checked h={20} label="EK ÖDEME1" />
                      <Check big checked h={20} label="Havale" />
                      <Check big checked h={20} label="EK ÖDEME 2" />
                      <PayFull><Check big checked h={22} label="Kapıda Ödeme / Nakit" /></PayFull>
                      <PayFull><Check big checked h={22} label="Kapıda Ödeme / Kredi Kartı" /></PayFull>
                    </PayGrid>
                  </ListGroup>
                </Criteria>
                <Actions>
                  <LinkButton><LensIcon />Sorgula</LinkButton>
                  <ToolButton $w={38} aria-label="Excel"><ExcelIcon /></ToolButton>
                  <ReportTools>
                    <PushButton $w={45} $h={36} aria-label="Tasarım"><DesignIcon /></PushButton>
                    <PushButton $w={45} $h={36} aria-label="Yazdır"><PrinterIcon /></PushButton>
                  </ReportTools>
                  <PushButton $w={76} $h={36}><InvoiceIcon /><span>Fatura<br />Bas</span></PushButton>
                </Actions>
              </Query>
            </Filters>

            <Tabs role="tablist">
              <Tab role="tab">Genel Rapor</Tab>
              <Tab role="tab" aria-selected $active>Pivot Rapor</Tab>
            </Tabs>
            <Page>
              <Pivot>
                <PivotZone>
                  <FilterRow>
                    {FIELDS.map(([label, w]) => (
                      <PivotField key={label} label={label} w={w} drop collapse={label === "Müşteri No"} />
                    ))}
                  </FilterRow>
                  <DataRow>
                    <PivotField label="Adet" w={30} />
                    <PivotField label="Ürün Toplamı" w={69} />
                    <ColumnField><PivotField label="Havuz" w={73} sorted drop /></ColumnField>
                  </DataRow>
                </PivotZone>
                <Grid>
                  <colgroup>{WIDTHS.map((w, i) => <col key={i} width={w} />)}</colgroup>
                  <thead>
                    <tr>
                      <Corner rowSpan={2}><PivotField label="Ürün Grubu" w={124} sorted drop /></Corner>
                      {COLUMNS.map((c) => <HeadCell key={c} colSpan={2} scope="colgroup">{c}</HeadCell>)}
                    </tr>
                    <tr>
                      {COLUMNS.map((c) => (
                        <React.Fragment key={c}>
                          <HeadCell $tall scope="col">Adet</HeadCell>
                          <HeadCell $tall scope="col">Ürün Toplamı</HeadCell>
                        </React.Fragment>
                      ))}
                    </tr>
                  </thead>
                  <tbody>
                    {ROWS.map(([name, vals], r) => (
                      <tr key={name}>
                        <HeadCell $tall scope="row">{name}</HeadCell>
                        {vals.map((v, c) => (
                          <Value key={c} $total={c > 5 || r === ROWS.length - 1} $selected={r === 0 && c === 0}>{v}</Value>
                        ))}
                      </tr>
                    ))}
                  </tbody>
                </Grid>
              </Pivot>
            </Page>
          </Main>
        </Body>

        <StatusBar>
          <StatusCell $w={197} $align="flex-start"><GlobeIcon /><Connection>Offline-14</Connection></StatusCell>
          <StatusCell $w={100}>INKASO</StatusCell>
          <StatusCell $w={220}>ADEM HÜR</StatusCell>
          <StatusCell $w={300} />
          <StatusCell $align="flex-end">27 Mart 2015 Cuma<ToolButton as="span" $w={20}><GripIcon /></ToolButton></StatusCell>
        </StatusBar>
      </Client>
    </Window>
  );
}
